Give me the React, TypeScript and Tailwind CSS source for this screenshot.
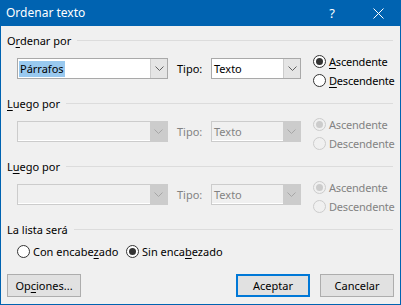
import React from 'react';

// Accelerator-key underline helper: underlines the character at index `at`
const Acc: React.FC<{ text: string; at?: number }> = ({ text, at }) => {
  if (at === undefined) return <>{text}</>;
  return (
    <>
      {text.slice(0, at)}
      <span className="underline underline-offset-2">{text[at]}</span>
      {text.slice(at + 1)}
    </>
  );
};

const Chevron: React.FC<{ color: string }> = ({ color }) => (
  <svg width="9" height="5" viewBox="0 0 9 5" fill="none">
    <path d="M0.5 0.5 L4.5 4.5 L8.5 0.5" stroke={color} strokeWidth="1" />
  </svg>
);

interface ComboProps {
  value: string;
  width: string;
  disabled?: boolean;
  selected?: boolean;
}

const Combo: React.FC<ComboProps> = ({ value, width, disabled, selected }) => {
  if (disabled) {
    return (
      <div className={`${width} h-[21px] flex border border-[#cccccc] bg-[#f0f0f0]`}>
        <div className="flex-1 flex items-center pl-[2px] text-[#838383] border-b border-white">{value}</div>
        <div className="w-[17px] bg-[#cccccc] flex items-center justify-center">
          <Chevron color="#a6a6a6" />
        </div>
      </div>
    );
  }
  return (
    <div className={`${width} h-[21px] flex border border-[#a9a9a9] bg-white`}>
      <div className="flex-1 flex items-center pl-[1px]">
        <span className={selected ? 'bg-[#99c9ef] px-[1px] leading-[16px]' : 'pl-[1px]'}>{value}</span>
      </div>
      <div className="w-[17px] bg-[#e5e5e5] border-l border-[#cccccc] flex items-center justify-center">
        <Chevron color="#606060" />
      </div>
    </div>
  );
};

const Radio: React.FC<{ label: string; checked?: boolean; disabled?: boolean; acc?: number }> = ({
  label,
  checked,
  disabled,
  acc,
}) => (
  <div className={`flex items-center gap-[3px] ${disabled ? 'text-[#838383]' : 'text-black'}`}>
    <div
      className={`w-[13px] h-[13px] rounded-full border flex items-center justify-center ${
        disabled ? 'border-[#cccccc] bg-[#f0f0f0]' : 'border-[#333333] bg-white'
      }`}
    >
      {checked && (
        <div className={`w-[7px] h-[7px] rounded-full ${disabled ? 'bg-[#cccccc]' : 'bg-[#333333]'}`} />
      )}
    </div>
    <span className="whitespace-nowrap">
      <Acc text={label} at={disabled ? undefined : acc} />
    </span>
  </div>
);

const Header: React.FC<{ text: string; acc?: number }> = ({ text, acc }) => (
  <div className="h-[16px] flex items-center gap-[6px] pl-[6px] pr-[7px]">
    <span className="whitespace-nowrap">
      <Acc text={text} at={acc} />
    </span>
    <div className="flex-1 h-px bg-[#dcdcdc]" />
  </div>
);

interface SortGroupProps {
  title: string;
  acc: number;
  value: string;
  disabled?: boolean;
}

const SortGroup: React.FC<SortGroupProps> = ({ title, acc, value, disabled }) => (
  <div className="flex flex-col">
    <Header text={title} acc={acc} />
    <div className="flex items-start mt-[4px] mb-[5px] h-[38px]">
      <div className="mt-[6px] ml-[16px] flex items-center">
        <Combo value={value} width="w-[151px]" disabled={disabled} selected={!disabled} />
        <span className={`ml-[9px] w-[34px] ${disabled ? 'text-[#838383]' : ''}`}>Tipo:</span>
        <Combo value="Texto" width="w-[90px]" disabled={disabled} />
      </div>
      <div className="ml-[12px] flex flex-col tracking-[-0.2px]">
        <div className="h-[19px] flex items-center">
          <Radio label="Ascendente" checked disabled={disabled} acc={0} />
        </div>
        <div className="h-[19px] flex items-center">
          <Radio label="Descendente" disabled={disabled} acc={0} />
        </div>
      </div>
    </div>
  </div>
);

const Button: React.FC<{ label: string; acc?: number; primary?: boolean }> = ({ label, acc, primary }) => (
  <div
    className={`w-[74px] h-[23px] flex items-center justify-center bg-[#e1e1e1] ${
      primary ? 'border-2 border-[#0078d7]' : 'border border-[#adadad]'
    }`}
  >
    <Acc text={label} at={acc} />
  </div>
);

export default function App() {
  return (
    <div
      className="w-[401px] h-[305px] flex flex-col bg-[#f0f0f0] border border-[#0063b1] border-t-0 text-[11px] text-black leading-none"
      style={{ fontFamily: '"Noto Sans", "Open Sans", sans-serif' }}
    >
      <div className="h-[26px] bg-[#0063b1] text-white flex items-center -mx-px">
        <span className="pl-[6px] text-[12px] flex-1">Ordenar texto</span>
        <span className="w-[46px] text-center text-[13px]">?</span>
        <div className="w-[46px] flex items-center justify-center">
          <svg width="11" height="11" viewBox="0 0 11 11">
            <path d="M0.5 0.5 L10.5 10.5 M10.5 0.5 L0.5 10.5" stroke="white" strokeWidth="1" />
          </svg>
        </div>
      </div>

      <div className="flex flex-col pt-[6px]">
        <SortGroup title="Ordenar por" acc={1} value="Párrafos" />
        <SortGroup title="Luego por" acc={0} value="" disabled />
        <SortGroup title="Luego por" acc={1} value="" disabled />

        <Header text="La lista será" />
        <div className="h-[20px] mt-[4px] flex items-center pl-[16px]">
          <div className="w-[109px]">
            <Radio label="Con encabezado" acc={10} />
          </div>
          <Radio label="Sin encabezado" checked acc={8} />
        </div>

        <div className="flex mt-[13px] px-[6px]">
          <Button label="Opciones..." acc={2} />
          <div className="flex-1" />
          <Button label="Aceptar" primary />
          <div className="w-[10px]" />
          <Button label="Cancelar" />
        </div>
      </div>
    </div>
  );
}
